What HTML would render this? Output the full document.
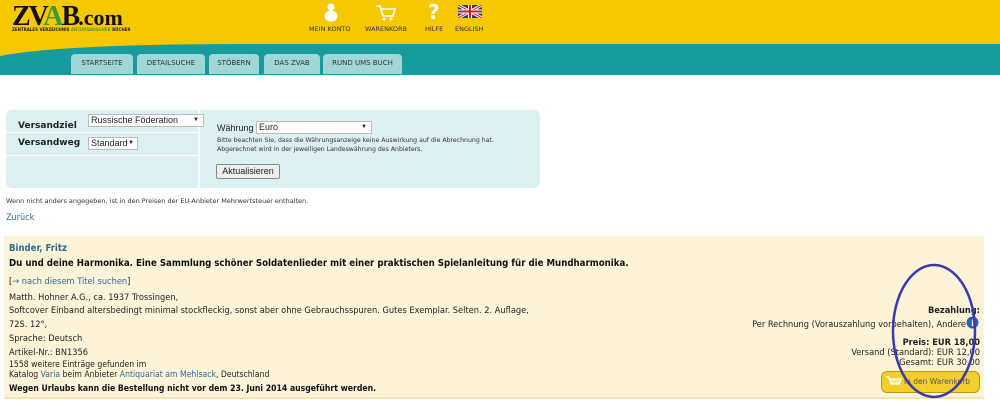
<!DOCTYPE html>
<html><head><meta charset="utf-8"><style>
*{margin:0;padding:0;box-sizing:border-box}
body{width:1000px;height:401px;overflow:hidden;background:#fff;font-family:Verdana,"DejaVu Sans",sans-serif;font-size:8px;color:#222;position:relative}
.a{position:absolute}
.hdr{left:0;top:0;width:1000px;height:75px;background:#f6c800}
.tab{top:54px;height:20px;background:#9ed7d6;border-radius:4px 4px 0 0;font-size:7px;color:#333;text-align:center;line-height:19px}
.logo{left:12px;top:2px;font-family:"Liberation Serif",serif;font-size:28px;font-weight:bold;letter-spacing:-2px;color:#111;line-height:30px}
.nav{top:25px;font-size:6.5px;color:#333;text-align:center}
.box{left:6px;top:110px;width:534px;height:78px;background:#dceff1;border-radius:6px}
.sel{background:#fff;border:1px solid #bbb;font-family:"Liberation Sans",sans-serif;font-size:9px;height:13px;line-height:11px;padding-left:2px}
.cream{left:4px;top:236px;width:980px;height:162px;background:#fcf3d9}
.ln{left:9px;font-size:9.2px;color:#222;font-family:"DejaVu Sans Condensed","DejaVu Sans",sans-serif}
a,.lk{color:#2c6a98}
</style></head><body>
<div class="a hdr"></div>
<svg class="a" style="left:0;top:38px" width="1000" height="37"><path d="M0 18 Q60 6 250 6 L1000 6 L1000 37 L0 37Z" fill="#169c9c"/></svg>
<div class="a logo">ZV<span style="color:#3a9a3a">A</span>B<span style="font-size:22px;letter-spacing:0">.com</span></div>
<div class="a" style="left:12px;top:27px;font-size:4px;font-weight:bold;color:#222">ZENTRALES VERZEICHNIS <span style="color:#5a9a20">ANTIQUARISCHER</span> BÜCHER</div>
<svg class="a" style="left:322px;top:3px" width="18" height="19"><circle cx="9" cy="4" r="3.5" fill="#fff"/><ellipse cx="9" cy="13" rx="6.5" ry="5.5" fill="#fff"/></svg>
<svg class="a" style="left:375px;top:4px" width="22" height="18"><path d="M1 2h4l3 10h10l2-7H6" fill="none" stroke="#fff" stroke-width="1.6"/><circle cx="9" cy="15" r="1.5" fill="#fff"/><circle cx="16" cy="15" r="1.5" fill="#fff"/></svg>
<div class="a" style="left:428px;top:0px;font-size:20px;font-weight:bold;color:#fff">?</div>
<svg class="a" style="left:458px;top:5px" width="24" height="13"><rect width="24" height="13" fill="#1d3b8b"/><path d="M0 0L24 13M24 0L0 13" stroke="#fff" stroke-width="3"/><path d="M0 0L24 13M24 0L0 13" stroke="#c22" stroke-width="1"/><path d="M12 0v13M0 6.5h24" stroke="#fff" stroke-width="4"/><path d="M12 0v13M0 6.5h24" stroke="#c22" stroke-width="2"/></svg>
<div class="a nav" style="left:309px">MEIN KONTO</div>
<div class="a nav" style="left:365px">WARENKORB</div>
<div class="a nav" style="left:425px">HILFE</div>
<div class="a nav" style="left:455px">ENGLISH</div>
<div class="a tab" style="left:71px;width:62px">STARTSEITE</div>
<div class="a tab" style="left:137px;width:68px">DETAILSUCHE</div>
<div class="a tab" style="left:209px;width:50px">STÖBERN</div>
<div class="a tab" style="left:264px;width:56px">DAS ZVAB</div>
<div class="a tab" style="left:323px;width:79px">RUND UMS BUCH</div>

<div class="a box"></div>
<div class="a" style="left:198px;top:110px;width:2px;height:78px;background:#fff"></div>
<div class="a" style="left:6px;top:132px;width:192px;height:1px;background:#fff"></div>
<div class="a" style="left:6px;top:155px;width:192px;height:1px;background:#fff"></div>
<div class="a" style="left:18px;top:121px;font-size:9px;font-weight:bold">Versandziel</div>
<div class="a" style="left:18px;top:138px;font-size:9px;font-weight:bold">Versandweg</div>
<div class="a sel" style="left:88px;top:114px;width:116px">Russische Föderation <span style="float:right;margin-right:4px;font-size:6px">▼</span></div>
<div class="a sel" style="left:88px;top:137px;width:50px">Standard <span style="float:right;margin-right:3px;font-size:6px">▼</span></div>
<div class="a" style="left:217px;top:123px;font-family:'Liberation Sans',sans-serif;font-size:9px">Währung</div>
<div class="a sel" style="left:256px;top:121px;width:116px">Euro<span style="float:right;margin-right:4px;font-size:6px">▼</span></div>
<div class="a" style="left:217px;top:136px;font-size:6.2px;line-height:9px;color:#333">Bitte beachten Sie, dass die Währungsanzeige keine Auswirkung auf die Abrechnung hat.<br>Abgerechnet wird in der jeweiligen Landeswährung des Anbieters.</div>
<div class="a" style="left:216px;top:164px;width:64px;height:15px;border:1px solid #888;border-radius:2px;background:#eee;font-family:'Liberation Sans',sans-serif;font-size:9px;text-align:center;line-height:13px">Aktualisieren</div>
<div class="a" style="left:6px;top:197px;font-size:6.5px;color:#333">Wenn nicht anders angegeben, ist in den Preisen der EU-Anbieter Mehrwertsteuer enthalten.</div>
<div class="a lk" style="left:6px;top:213px;font-size:9px;font-family:'DejaVu Sans Condensed',sans-serif">Zurück</div>

<div class="a cream"></div>
<div class="a" style="left:4px;top:397px;width:980px;height:2px;background:#f3e4b0"></div>
<div class="a lk" style="left:9px;top:243px;font-size:9.5px;font-weight:bold;font-family:'DejaVu Sans Condensed',sans-serif">Binder, Fritz</div>
<div class="a" style="left:9px;top:258px;font-size:9.6px;font-weight:bold;color:#111;font-family:'DejaVu Sans Condensed',sans-serif">Du und deine Harmonika. Eine Sammlung schöner Soldatenlieder mit einer praktischen Spielanleitung für die Mundharmonika.</div>
<div class="a ln" style="top:276px">[<span class="lk">→ nach diesem Titel suchen</span>]</div>
<div class="a ln" style="top:292px">Matth. Hohner A.G., ca. 1937 Trossingen,</div>
<div class="a ln" style="top:305px">Softcover Einband altersbedingt minimal stockfleckig, sonst aber ohne Gebrauchsspuren. Gutes Exemplar. Selten. 2. Auflage,</div>
<div class="a ln" style="top:319px">72S. 12°,</div>
<div class="a ln" style="top:333px">Sprache: Deutsch</div>
<div class="a ln" style="top:347px">Artikel-Nr.: BN1356</div>
<div class="a ln" style="top:360px;line-height:10px;font-size:8.6px">1558 weitere Einträge gefunden im<br>Katalog <span class="lk">Varia</span> beim Anbieter <span class="lk">Antiquariat am Mehlsack</span>, Deutschland</div>
<div class="a ln" style="top:384px;font-weight:bold;color:#111;font-size:8.6px">Wegen Urlaubs kann die Bestellung nicht vor dem 23. Juni 2014 ausgeführt werden.</div>

<div class="a ln" style="left:auto;right:20px;top:305px;font-weight:bold;text-align:right">Bezahlung:</div>
<div class="a ln" style="left:auto;right:34px;top:319px;text-align:right">Per Rechnung (Vorauszahlung vorbehalten), Andere</div>
<svg class="a" style="left:966px;top:316px" width="13" height="13"><circle cx="6.5" cy="6.5" r="6" fill="#2d62b0"/><text x="6.5" y="10" font-size="9" font-weight="bold" fill="#fff" text-anchor="middle" font-family="Liberation Serif">i</text></svg>
<div class="a ln" style="left:auto;right:20px;top:338px;text-align:right;line-height:10px"><b>Preis: EUR 18,00</b><br>Versand (Standard): EUR 12,00<br>Gesamt: EUR 30,00</div>
<div class="a" style="left:881px;top:371px;width:99px;height:22px;background:#f2cf2c;border:1px solid #b89a10;border-radius:6px;font-size:7.5px;color:#555;line-height:20px;padding-left:22px">in den Warenkorb</div>
<svg class="a" style="left:885px;top:375px" width="18" height="14"><path d="M1 2h3l2 7h8l2-5H5" fill="#f8e890" stroke="#fff" stroke-width="1.3"/></svg>
<svg class="a" style="left:890px;top:262px" width="88" height="138"><ellipse cx="44" cy="69" rx="41" ry="66" fill="none" stroke="#3a3ab0" stroke-width="2.5"/></svg>
</body></html>
